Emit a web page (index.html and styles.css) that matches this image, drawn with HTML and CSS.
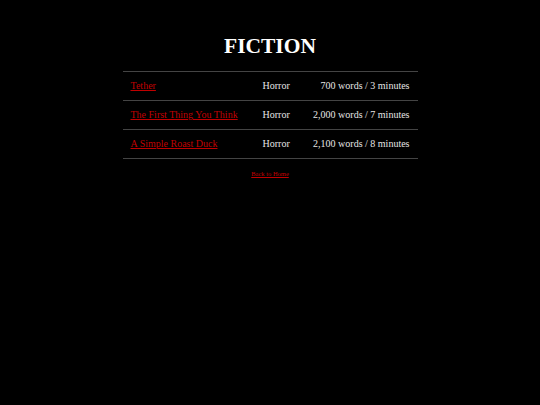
FILE: index.html
```html
<!DOCTYPE html>
<html>
<head>
<meta charset="utf-8">
<link rel="stylesheet" href="styles.css">
</head>
<body>
<main class="page">
  <h1 class="title">FICTION</h1>
  <table class="stories">
    <tr>
      <td class="name"><a href="#">Tether</a></td>
      <td class="genre">Horror</td>
      <td class="length">700 words / 3 minutes</td>
    </tr>
    <tr>
      <td class="name"><a href="#">The First Thing You Think</a></td>
      <td class="genre">Horror</td>
      <td class="length">2,000 words / 7 minutes</td>
    </tr>
    <tr>
      <td class="name"><a href="#">A Simple Roast Duck</a></td>
      <td class="genre">Horror</td>
      <td class="length">2,100 words / 8 minutes</td>
    </tr>
  </table>
  <p class="back"><a href="#">Back to Home</a></p>
</main>
</body>
</html>
```

FILE: styles.css
```css
html, body {
  margin: 0;
  padding: 0;
  background: #000;
}
body {
  font-family: "Liberation Serif", "Times New Roman", serif;
  color: #e6e6e6;
  width: 540px;
  height: 405px;
}
.page {
  display: flex;
  flex-direction: column;
  align-items: center;
  padding-top: 34px;
}
.title {
  margin: 0 0 12px 0;
  font-size: 21.5px;
  font-weight: bold;
  line-height: 25px;
  color: #fff;
}
.stories {
  width: 295px;
  border-collapse: collapse;
  table-layout: fixed;
  font-size: 10px;
  line-height: 12px;
  border-top: 1px solid #444;
}
.stories tr {
  border-bottom: 1px solid #444;
}
.stories td {
  padding: 8px 8px;
  white-space: nowrap;
}
.name { width: 116px; }
.genre { width: 30px; }
.length { text-align: right; }
.stories a, .back a {
  color: #c00000;
}
.back {
  margin: 11px 0 0 0;
  font-size: 6.5px;
  line-height: 8px;
}
```
